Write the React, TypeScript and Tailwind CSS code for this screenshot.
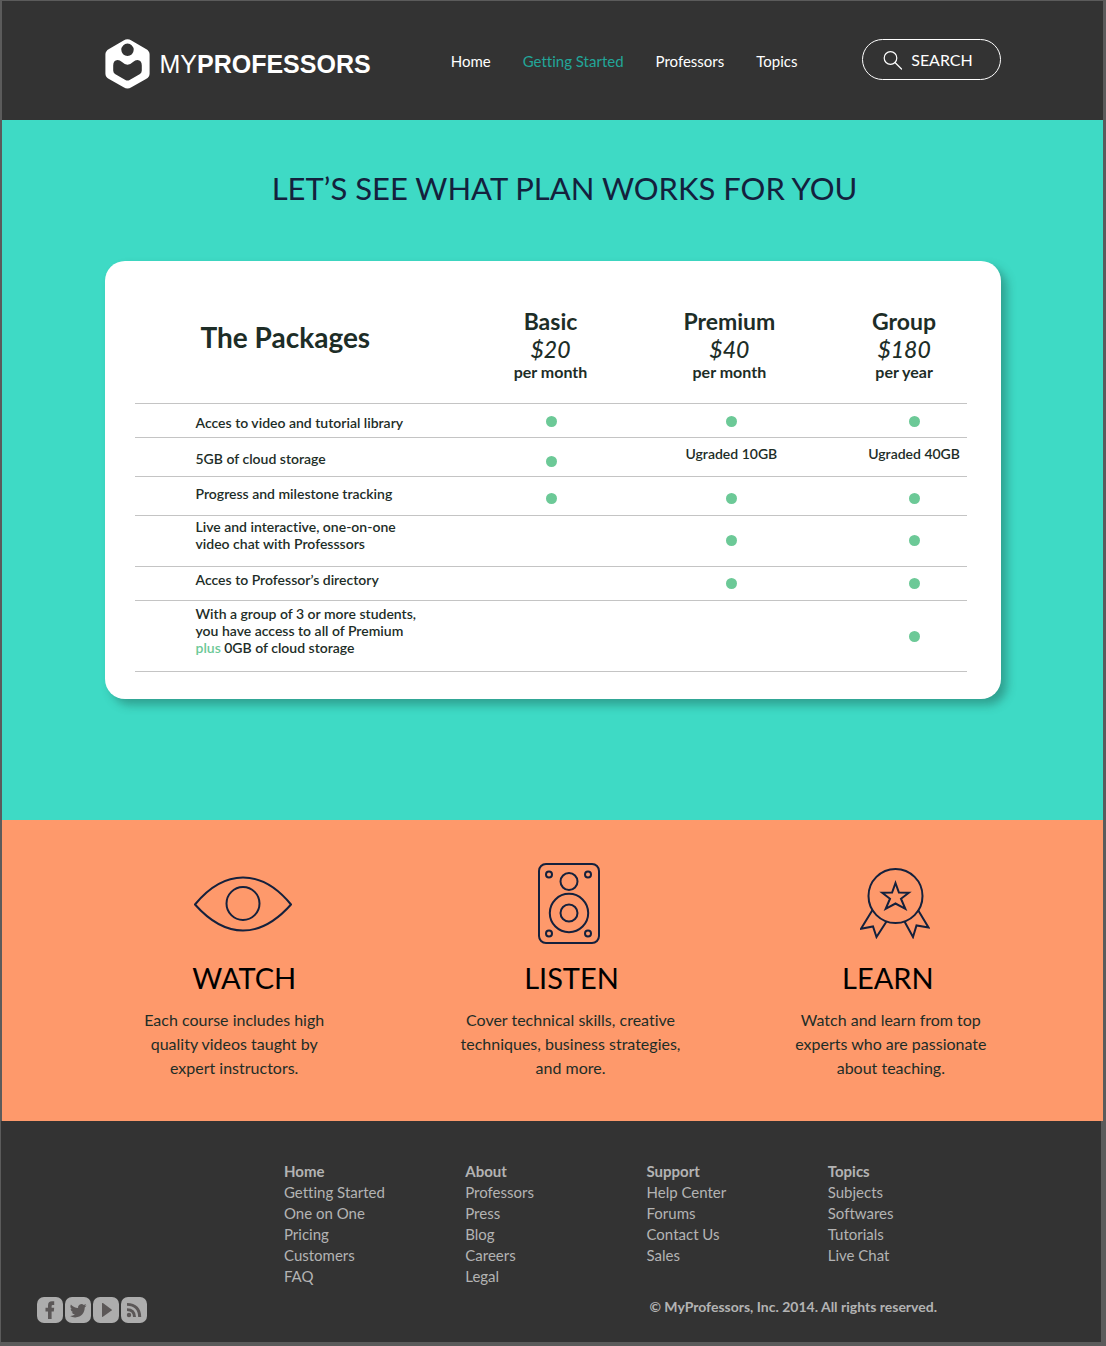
import React from "react";

const navLinks = [
  { label: "Home", active: false },
  { label: "Getting Started", active: true },
  { label: "Professors", active: false },
  { label: "Topics", active: false },
];

function LogoMark() {
  return (
    <svg width="45" height="50" viewBox="0 0 45 50" aria-hidden="true" className="shrink-0">
      <path
        fill="#fff"
        fillRule="evenodd"
        d="M18.6 1.6 Q22.5 -.9 26.4 1.6 L41 10 Q44.6 12 44.6 15.5 V34.5 Q44.6 38 41 40 L26.4 48.2 Q22.5 50.6 18.6 48.2 L4 40 Q.4 38 .4 34.5 V15.5 Q.4 12 4 10 Z
        M22.5 4.6 a6.2 6.2 0 1 0 0 12.4 a6.2 6.2 0 1 0 0 -12.4 Z
        M8.2 26.5 Q8.2 21.2 12.6 21 Q14.800 21 17 23 Q22.500 28.400 28 23 Q30.200 21 32.400 21 Q36.800 21.200 36.800 26.500 V31.500 Q36.800 33.800 35 34.900 L24.600 40.900 Q22.500 42 20.400 40.900 L10 34.900 Q8.200 33.800 8.200 31.500 Z"
      />
    </svg>
  );
}

function Header() {
  return (
    <header className="bg-[#333333] px-6 pt-[38px] pb-[31px]">
      <div className="mx-auto flex max-w-4xl items-start justify-between">
        <a href="#home" className="flex items-center gap-2.5 font-['Liberation_Sans',sans-serif] text-[25px] leading-none text-white">
          <LogoMark />
          <span>
            MY<b>PROFESSORS</b>
          </span>
        </a>
        <nav aria-label="Main" className="mt-2.5 flex gap-8 pl-4 text-[15px] leading-6">
          {navLinks.map((link) => (
            <a key={link.label} href="#" className={link.active ? "text-[#22a699]" : "text-white"}>
              {link.label}
            </a>
          ))}
        </nav>
        <button
          type="button"
          className="flex h-[41px] w-[139px] items-center justify-center gap-2 rounded-full border border-white pr-1.5 text-base text-white"
        >
          <svg width="20" height="20" viewBox="0 0 20 20" fill="none" stroke="currentColor" strokeWidth="1.2" strokeLinecap="round" aria-hidden="true">
            <circle cx="7.500" cy="8" r="6.300" />
            <path d="M12 12.500 L18.500 19" />
          </svg>
          SEARCH
        </button>
      </div>
    </header>
  );
}

type Row = {
  label: React.ReactNode;
  height: string;
  labelPad: string;
  dotOffset: string;
  cells: [string, string, string];
};

const rows: Row[] = [
  {
    label: "Acces to video and tutorial library",
    height: "h-[34px]",
    labelPad: "pt-2.5",
    dotOffset: "mt-0.5",
    cells: ["dot", "dot", "dot"],
  },
  {
    label: "5GB of cloud storage",
    height: "h-[39px]",
    labelPad: "pt-3",
    dotOffset: "mt-2.5",
    cells: ["dot", "Ugraded 10GB", "Ugraded 40GB"],
  },
  {
    label: "Progress and milestone tracking",
    height: "h-[39px]",
    labelPad: "pt-2",
    dotOffset: "mt-1.5",
    cells: ["dot", "dot", "dot"],
  },
  {
    label: (
      <>
        Live and interactive, one-on-one
        <br />
        video chat with Professsors
      </>
    ),
    height: "h-[51px]",
    labelPad: "pt-0.5",
    dotOffset: "",
    cells: ["", "dot", "dot"],
  },
  {
    label: "Acces to Professor’s directory",
    height: "h-[34px]",
    labelPad: "pt-1",
    dotOffset: "",
    cells: ["", "dot", "dot"],
  },
  {
    label: (
      <>
        With a group of 3 or more students,
        <br />
        you have access to all of Premium
        <br />
        <span className="text-[#6cc997]">plus</span> 0GB of cloud storage
      </>
    ),
    height: "h-[71px]",
    labelPad: "pt-1",
    dotOffset: "mt-0.5",
    cells: ["", "", "dot"],
  },
];

const plans = [
  { name: "Basic", price: "$20", period: "per month" },
  { name: "Premium", price: "$40", period: "per month" },
  { name: "Group", price: "$180", period: "per year" },
];

function CellContent({ value, dotOffset }: { value: string; dotOffset: string }) {
  if (value === "dot") {
    return <span role="img" aria-label="Included" className={`mx-auto block size-[11px] rounded-full bg-[#6cc997] ${dotOffset}`} />;
  }
  return <span className="block whitespace-nowrap pb-1.5">{value}</span>;
}

function Packages() {
  return (
    <section className="bg-[#3edac5] px-6 pt-12 pb-[121px]">
      <h1 className="pl-6 text-center text-[31px] leading-10 text-[#14213d]">LET’S SEE WHAT PLAN WORKS FOR YOU</h1>
      <div className="mx-auto mt-[53px] max-w-4xl rounded-[20px] bg-white pt-11 pr-[34px] pb-[27px] pl-[30px] text-[#1d2d27] shadow-[6px_6px_10px_rgba(30,90,80,0.45)]">
        <table className="w-full table-fixed border-collapse text-sm leading-[17px] font-semibold">
          <colgroup>
            <col className="w-[42%]" />
            <col className="w-[16%]" />
            <col className="w-[27%]" />
            <col className="w-[15%]" />
          </colgroup>
          <thead>
            <tr className="h-[98px] border-b border-[#c4c4c4] align-top">
              <th scope="col" className="pt-3 pl-[66px] text-left text-[28px] leading-10 font-bold">
                The Packages
              </th>
              {plans.map((plan) => (
                <th key={plan.name} scope="col" className="font-bold whitespace-nowrap">
                  <span className="block text-[23px] leading-8">{plan.name}</span>
                  <span className="block text-[23px] leading-6 font-medium italic">{plan.price}</span>
                  <span className="block text-base leading-[22px]">{plan.period}</span>
                </th>
              ))}
            </tr>
          </thead>
          <tbody>
            {rows.map((row, i) => (
              <tr key={i} className={`border-b border-[#c4c4c4] ${row.height}`}>
                <th scope="row" className={`pl-[61px] text-left align-top font-semibold whitespace-nowrap ${row.labelPad}`}>
                  {row.label}
                </th>
                <td className="pl-0.5 text-center">
                  <CellContent value={row.cells[0]} dotOffset={row.dotOffset} />
                </td>
                <td className="pl-1 text-center">
                  <CellContent value={row.cells[1]} dotOffset={row.dotOffset} />
                </td>
                <td className="pl-5 text-center">
                  <CellContent value={row.cells[2]} dotOffset={row.dotOffset} />
                </td>
              </tr>
            ))}
          </tbody>
        </table>
      </div>
    </section>
  );
}

function EyeIcon() {
  return (
    <svg width="98" height="56" viewBox="0 0 98 56" fill="none" stroke="#14213d" strokeWidth="2" strokeLinejoin="round" aria-hidden="true">
      <path d="M1 28.500 C17 9 34 1.500 49 1.500 C64 1.500 81 9 97 28.500 C81 46.500 64 54.500 49 54.500 C34 54.500 17 46.500 1 28.500 Z" />
      <circle cx="49" cy="27.500" r="16.500" />
    </svg>
  );
}

function SpeakerIcon() {
  return (
    <svg width="62" height="82" viewBox="0 0 62 82" fill="none" stroke="#14213d" strokeWidth="2" aria-hidden="true">
      <rect x="1" y="1" width="60" height="79" rx="7" />
      <circle cx="31" cy="18.500" r="8.500" />
      <circle cx="31" cy="50" r="19.200" />
      <circle cx="31" cy="50" r="8.500" />
      <circle cx="11" cy="11.500" r="3" />
      <circle cx="50" cy="11.500" r="3" />
      <circle cx="11" cy="70.500" r="3" />
      <circle cx="50" cy="70.500" r="3" />
    </svg>
  );
}

function RibbonIcon() {
  return (
    <svg width="70" height="71" viewBox="0 0 70 71" fill="none" stroke="#14213d" strokeWidth="2" aria-hidden="true">
      <circle cx="35.500" cy="28" r="27" />
      <path d="M35.500 15 L38.900 24.600 L48.800 24.700 L41 30.700 L45.300 40.800 L35.500 35.500 L25.700 40.800 L30 30.700 L22.200 24.700 L32.100 24.600 Z" />
      <path d="M12.500 42 L1 60.700 L13 58.500 L16.500 69 L26.500 53.500" />
      <path d="M58 42 L68.500 59.500 L56.500 57.500 L53 69 L44.500 53.500" />
    </svg>
  );
}

const features = [
  {
    title: "WATCH",
    icon: <EyeIcon />,
    iconClass: "pl-[18px]",
    titleClass: "pl-5",
    lines: ["Each course includes high", "quality videos taught by", "expert instructors."],
  },
  {
    title: "LISTEN",
    icon: <SpeakerIcon />,
    iconClass: "pr-1",
    titleClass: "pl-0.5",
    lines: ["Cover technical skills, creative", "techniques, business strategies,", "and more."],
  },
  {
    title: "LEARN",
    icon: <RibbonIcon />,
    iconClass: "pl-2",
    titleClass: "pr-1.5",
    lines: ["Watch and learn from top", "experts who are passionate", "about teaching."],
  },
];

function Features() {
  return (
    <section className="bg-[#fe996b] pt-[42px] pr-[60px] pb-[41px] pl-16">
      <div className="grid grid-cols-[336fr_336fr_304fr] text-center">
        {features.map((f) => (
          <article key={f.title}>
            <div className={`flex h-[84px] items-center justify-center ${f.iconClass}`}>{f.icon}</div>
            <h2 className={`mt-3.5 text-[29px] leading-9 text-black ${f.titleClass}`}>{f.title}</h2>
            <p className="mt-3 text-base leading-6 text-[#1d2d27]">
              {f.lines.map((line) => (
                <span key={line} className="block whitespace-nowrap">
                  {line}
                </span>
              ))}
            </p>
          </article>
        ))}
      </div>
    </section>
  );
}

const footerColumns = [
  { title: "Home", links: ["Getting Started", "One on One", "Pricing", "Customers", "FAQ"] },
  { title: "About", links: ["Professors", "Press", "Blog", "Careers", "Legal"] },
  { title: "Support", links: ["Help Center", "Forums", "Contact Us", "Sales"] },
  { title: "Topics", links: ["Subjects", "Softwares", "Tutorials", "Live Chat"] },
];

const socials = [
  {
    name: "Facebook",
    shape: <path d="M11 22 V14.500 H8.500 V10.800 H11 V8.500 Q11 4.300 15 4.300 H17.200 V7.900 H15.600 Q14.600 7.900 14.600 9 V10.800 H17.200 L16.800 14.500 H14.600 V22 Z" />,
  },
  {
    name: "Twitter",
    shape: (
      <path d="M21.500 8.500 Q20.700 8.900 19.600 9 Q20.800 8.200 21.100 7.100 Q20 7.800 18.800 8 A3.500 3.500 0 0 0 13 11.100 Q8.800 10.900 5.900 7.500 Q4.500 10.500 7 12.200 Q6.200 12.100 5.500 11.800 Q5.700 14.400 8.200 15.200 Q7.500 15.400 6.700 15.300 Q7.400 17.300 9.900 17.600 Q7.900 19.200 5 19 Q7.300 20.500 10.300 20.400 C16.500 20.300 19.800 15.500 19.700 10.600 Q20.800 9.700 21.500 8.500 Z" />
    ),
  },
  { name: "YouTube", shape: <path d="M9 6.500 Q9 5.600 9.900 6.100 L18.600 12.400 Q19.300 13 18.600 13.600 L9.900 19.700 Q9 20.200 9 19.300 Z" /> },
  {
    name: "RSS",
    shape: (
      <>
        <circle cx="8" cy="18" r="2.200" />
        <path d="M6 11.300 V14 Q12 14 12 20 H15 Q14.800 11.500 6 11.300 Z" />
        <path d="M6 6 V8.800 Q17 9 17.200 20 H20.200 Q20 6.500 6 6 Z" />
      </>
    ),
  },
];

function Footer() {
  return (
    <footer className="mr-[5px] ml-px bg-[#333333] pt-10 pb-[19px] text-[15px] leading-[21px] text-[#b3b3b3]">
      <div className="grid min-h-[126px] grid-cols-4 pr-[92px] pl-[283px]">
        {footerColumns.map((col) => (
          <nav key={col.title} aria-label={col.title}>
            <h3 className="font-bold">{col.title}</h3>
            <ul>
              {col.links.map((link) => (
                <li key={link}>
                  <a href="#">{link}</a>
                </li>
              ))}
            </ul>
          </nav>
        ))}
      </div>
      <div className="mt-[10px] flex items-end justify-between pr-[164px] pl-9">
        <div className="flex gap-0.5">
          {socials.map((s) => (
            <a key={s.name} href="#" aria-label={s.name} className="size-[26px] rounded-[7px] bg-[#adadad]">
              <svg width="26" height="26" viewBox="0 0 26 26" fill="#5b5757" aria-hidden="true">
                {s.shape}
              </svg>
            </a>
          ))}
        </div>
        <p className="pb-1.5 text-sm font-bold">© MyProfessors, Inc. 2014. All rights reserved.</p>
      </div>
    </footer>
  );
}

export default function App() {
  return (
    <div className="bg-[#5b5b5b] pt-px pb-1 font-[Lato,sans-serif] [font-variant-ligatures:none]">
      <div className="mr-[3px] ml-0.5">
        <Header />
        <main>
          <Packages />
          <Features />
        </main>
      </div>
      <Footer />
    </div>
  );
}
